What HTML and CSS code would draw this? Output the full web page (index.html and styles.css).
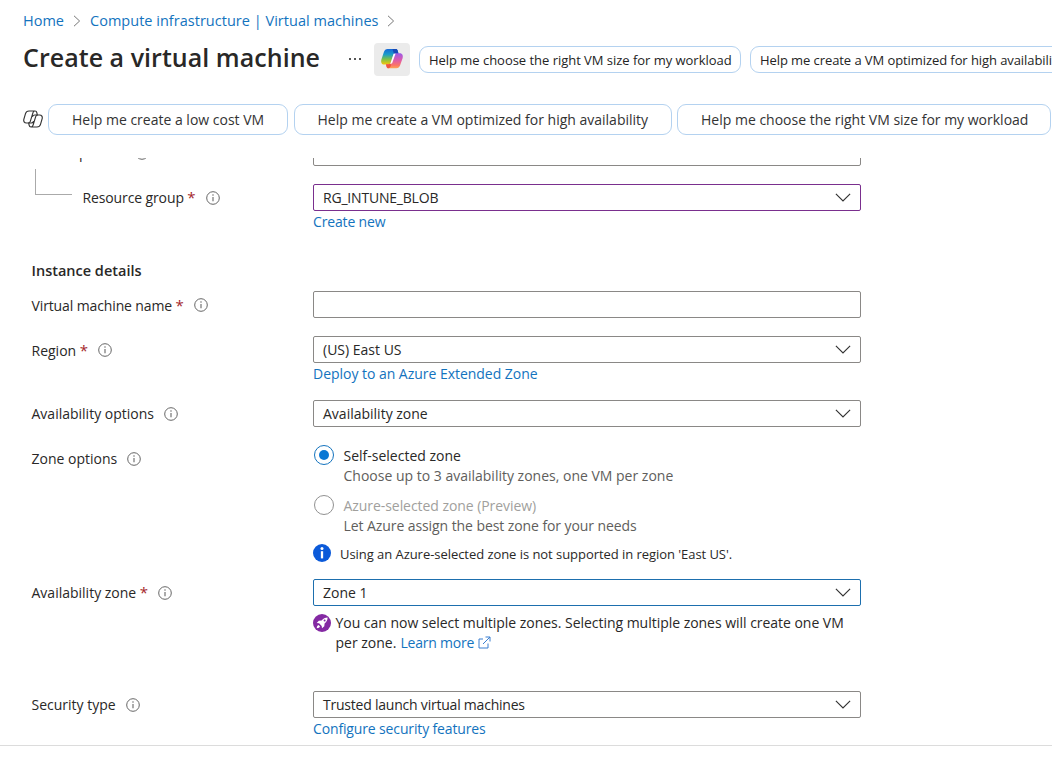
FILE: index.html
```html
<!DOCTYPE html>
<html lang="en">
<head>
<meta charset="utf-8">
<title>Create a virtual machine</title>
<link rel="stylesheet" href="styles.css">
</head>
<body>
<svg class="defs" width="0" height="0" aria-hidden="true">
  <symbol id="info" viewBox="0 0 14 14"><circle cx="7" cy="7" r="6.3" fill="none" stroke="#666" stroke-width="1"/><path d="M7 6v4.2" stroke="#666" stroke-width="1.1"/><circle cx="7" cy="4.1" r=".75" fill="#666"/></symbol>
  <symbol id="down" viewBox="0 0 16 9"><path d="M.9.9 8 8 15.1.9" fill="none" stroke="#333" stroke-width="1.15"/></symbol>
  <symbol id="crumb" viewBox="0 0 8 12"><path d="M1 .8 6.6 6 1 11.2" fill="none" stroke="#777" stroke-width="1"/></symbol>
</svg>
<div class="page">
  <nav class="crumbs">
    <a class="crumb-home">Home</a><svg class="sep"><use href="#crumb"/></svg>
    <a class="crumb-vm">Compute infrastructure | Virtual machines</a><svg class="sep"><use href="#crumb"/></svg>
  </nav>
  <header class="title-row">
    <h1>Create a virtual machine</h1>
    <span class="more"><i></i><i></i><i></i></span>
    <span class="copilot">
      <svg width="24" height="22" viewBox="0 0 24 22">
        <defs>
          <linearGradient id="cl" x1="0" y1="0" x2="0" y2="1"><stop offset="0" stop-color="#1668d8"/><stop offset=".35" stop-color="#1a9cc8"/><stop offset=".65" stop-color="#78c04a"/><stop offset="1" stop-color="#f5c50a"/></linearGradient>
          <linearGradient id="cr" x1="0" y1="0" x2="0" y2="1"><stop offset="0" stop-color="#9a5be8"/><stop offset=".45" stop-color="#dc5aae"/><stop offset=".8" stop-color="#fb7468"/><stop offset="1" stop-color="#fda555"/></linearGradient>
        </defs>
        <path d="M7.600 1h8.200c1 0 1.600.7 1.900 1.700l.7 2.500h-1.800c-2 0-2.800 1.200-3.400 3l-1.700 5.600c-.5 1.600-1.500 2.700-3 2.700H4.200C1.500 16.500.7 14 1.400 11.400L3.900 4C4.600 2 5.700 1 7.600 1Z" fill="url(#cl)"/>
        <path d="M13.500 1h2.300c1 0 1.600.7 1.900 1.700l.9 3.300h-4.600l-1.500-5Z" fill="#1849b6"/>
        <path d="M16.400 20.200H8.500c-1.200 0-1.700-.8-2-1.800l-.6-2.100h2.200c1.500 0 2.500-1 3-2.500l1.700-5.600c.6-1.900 1.500-3 3.400-3h3.600c2.700 0 3.500 2.500 2.800 5L20.100 17.200c-.7 2-1.800 3-3.700 3Z" fill="url(#cr)"/>
        <path d="m6 16.300.5 2.100c.3 1 .8 1.800 2 1.800 1.200 0 1.800-.9 2.200-2.200l1.200-4.700c-.6 1.800-1.600 3-3.300 3Z" fill="#ef543e"/>
        <path d="m13.600 5.800-3.500 10.400 2-.9 3.500-9.800Z" fill="#fff"/>
      </svg>
    </span>
    <span class="chip chip-a"><span>Help me choose the right VM size for my workload</span></span>
    <span class="chip chip-b"><span>Help me create a VM optimized for high availability</span></span>
  </header>
  <div class="prompts">
    <svg class="outline" width="20" height="18" viewBox="0 0 20 18" fill="none" stroke="#333" stroke-width="1.15">
      <path id="leaf" d="M6 1h6c-1.200 0-1.800.8-2.100 1.800L7.300 11.400c-.3 1-.9 1.600-2 1.600H3.400C1.300 13 .3 11.200.9 9.200L2.500 3.600C3 1.900 4.200 1 6 1ZM12 1c1.100 0 1.700.7 1.900 1.800l.4 2.200h-2.500c-1.200 0-2 .7-2.400 1.800"/>
      <use href="#leaf" transform="rotate(180 10 9)"/>
    </svg>
    <span class="pill pill-a"><span>Help me create a low cost VM</span></span>
    <span class="pill pill-b"><span>Help me create a VM optimized for high availability</span></span>
    <span class="pill pill-c"><span>Help me choose the right VM size for my workload</span></span>
  </div>
  <main class="form">
    <div class="row row-sub">
      <div class="label"><span class="t-sub">Subscription</span><b>*</b><svg class="info"><use href="#info"/></svg></div>
      <div class="box"></div>
    </div>
    <div class="row row-rg">
      <div class="label"><span class="branch"></span><span class="t-rg">Resource group</span><b>*</b><svg class="info"><use href="#info"/></svg></div>
      <div><div class="box purple"><span class="v-rg">RG_INTUNE_BLOB</span><svg class="down"><use href="#down"/></svg></div><a class="link l-new">Create new</a></div>
    </div>
    <h2>Instance details</h2>
    <div class="row row-name">
      <div class="label low"><span class="t-name">Virtual machine name</span><b>*</b><svg class="info"><use href="#info"/></svg></div>
      <div class="box"></div>
    </div>
    <div class="row row-region">
      <div class="label low"><span class="t-region">Region</span><b>*</b><svg class="info"><use href="#info"/></svg></div>
      <div><div class="box"><span class="v-region">(US) East US</span><svg class="down"><use href="#down"/></svg></div><a class="link l-deploy">Deploy to an Azure Extended Zone</a></div>
    </div>
    <div class="row row-avail">
      <div class="label"><span class="t-avail">Availability options</span><svg class="info"><use href="#info"/></svg></div>
      <div class="box"><span class="v-avail">Availability zone</span><svg class="down"><use href="#down"/></svg></div>
    </div>
    <div class="row row-zoneopt">
      <div class="label"><span class="t-zoneopt">Zone options</span><svg class="info"><use href="#info"/></svg></div>
      <div class="options">
        <div class="option"><span class="radio on"></span><div><p class="o-self">Self-selected zone</p><p class="hint o-choose">Choose up to 3 availability zones, one VM per zone</p></div></div>
        <div class="option"><span class="radio"></span><div><p class="off o-azure">Azure-selected zone (Preview)</p><p class="hint o-let">Let Azure assign the best zone for your needs</p></div></div>
        <div class="notice"><svg width="18" height="18" viewBox="0 0 18 18"><circle cx="9" cy="9" r="9" fill="#0b5ad9"/><circle cx="9" cy="4.500" r="1.500" fill="#fff"/><path d="M9 7.200v7.200" stroke="#fff" stroke-width="2.300"/></svg><span class="o-using">Using an Azure-selected zone is not supported in region 'East US'.</span></div>
      </div>
    </div>
    <div class="row row-zone">
      <div class="label"><span class="t-zone">Availability zone</span><b>*</b><svg class="info"><use href="#info"/></svg></div>
      <div><div class="box blue"><span class="v-zone">Zone 1</span><svg class="down"><use href="#down"/></svg></div>
        <div class="tip">
          <svg class="rocket" width="18" height="18" viewBox="0 0 18 18"><circle cx="9" cy="9" r="9" fill="#8429a3"/><path d="M14.600 3.400c-2.500 0-4.300 1-6 3L5.800 6.700 3.700 9l2.400.3 2.600 2.600.3 2.400 2.300-2.100.3-2.800c2-1.700 3-3.500 3-6Z" fill="#fff"/><path d="M3.800 14.200c0-1.700.5-2.700 1.700-3.200l1.500 1.500c-.5 1.200-1.500 1.700-3.200 1.700Z" fill="#fff"/><circle cx="11.600" cy="6.400" r="1" fill="#8429a3"/></svg>
          <div><p class="o-you">You can now select multiple zones. Selecting multiple zones will create one VM</p>
          <p class="tip-line"><span class="o-per">per zone.</span><a class="o-learn">Learn more</a><svg width="13" height="13" viewBox="0 0 13 13" fill="none" stroke="#3b7fd0" stroke-width="1"><path d="M5 3H1v9h9V7.500M7.500 1H12v4.500M12 1 5 8"/></svg></p></div>
        </div>
      </div>
    </div>
    <div class="row row-sec">
      <div class="label"><span class="t-sec">Security type</span><svg class="info"><use href="#info"/></svg></div>
      <div><div class="box"><span class="v-sec">Trusted launch virtual machines</span><svg class="down"><use href="#down"/></svg></div><a class="link l-conf">Configure security features</a></div>
    </div>
  </main>
  <footer class="footer"></footer>
</div>
</body>
</html>
```

FILE: styles.css
```css
* { box-sizing: border-box; }
body { margin: 0; background: #fff; color: #292827; font-family: "Open Sans", "Noto Sans", sans-serif; font-size: 14px; line-height: 20px; }
p, h1, h2 { margin: 0; }
a { color: #1373be; }
svg { flex: none; display: block; }
.defs { position: absolute; }
.page { width: 1052px; height: 768px; overflow: hidden; display: flex; flex-direction: column; white-space: nowrap; }

.crumbs { height: 40px; padding: 1px 0 0 23px; display: flex; align-items: center; font-size: 14.5px; }
.crumb-home { width: 42px; }
.crumb-vm { letter-spacing: 0.02px; }
.sep { width: 8px; height: 12px; margin: 0 9px 0 8px; }
.title-row { height: 38px; padding-left: 23px; display: flex; align-items: center; }
h1 { flex: none; width: 326px; font-size: 25px; line-height: 34px; font-weight: 600; letter-spacing: 0.04px; margin-top: -4px; }
.more { flex: none; display: flex; gap: 3px; width: 25px; }
.more i { width: 2px; height: 2px; background: #555; }
.copilot { flex: none; width: 36px; height: 33px; border-radius: 4px; background: #ebebeb; display: flex; align-items: center; justify-content: center; margin-right: 9px; }
.chip { flex: none; height: 27px; border: 1px solid #b4d2f0; border-radius: 9px; padding: 2px 0 0 9px; display: flex; align-items: center; margin-right: 9px; color: #242424; font-size: 13px; letter-spacing: -0.03px; }
.chip-a { width: 322px; }
.chip-b { width: 340px; letter-spacing: -0.08px; }

.prompts { height: 80px; padding: 26px 0 0 24px; display: flex; align-items: flex-start; }
.outline { margin: 6px 5px 0 -1px; }
.pill { flex: none; height: 31px; border: 1px solid #b4d2f0; border-radius: 9px; display: flex; align-items: center; padding-left: 23px; color: #333; }
.pill-a { width: 240px; margin-right: 6px; }
.pill-b { width: 378px; margin-right: 5px; padding-left: 22.5px; }
.pill-c { width: 374px; }

.form { height: 587px; overflow: hidden; padding-left: 31px; }
.row { display: grid; grid-template-columns: 282px 548px; align-items: start; }
.label { height: 27px; display: flex; align-items: center; padding-left: 0.5px; }
.low { height: 29px; }
.low .info { margin-top: -1px; }
.label b { color: #a4262c; font-weight: 500; font-size: 15px; margin: -2px 0 0 3.5px; width: 8.5px; }
.info { width: 14px; height: 14px; margin-left: 10px; }
.box { height: 27px; border: 1px solid #8a8886; border-radius: 2px; padding: 0 9px; display: flex; align-items: center; justify-content: space-between; }
.purple { border-color: #7a2f8e; }
.blue { border-color: #1d6fae; }
.down { width: 16px; height: 9px; }
.link { display: block; line-height: 22px; }
.row-sub { margin-top: -19px; height: 45px; }
.row-rg { height: 76px; }
.branch { width: 37px; height: 26px; margin: -31px 10.5px 0 3.5px; border: solid #aaa; border-width: 0 0 1px 1px; }
h2 { font-size: 14.5px; line-height: 21px; height: 31px; font-weight: 600; padding-left: 0.5px; }
.row-name { height: 45px; }
.row-region { height: 64px; }
.row-avail { height: 45px; }
.row-zoneopt { height: 134px; }
.row-zone { height: 112px; }
.options { display: flex; flex-direction: column; }
.option { height: 50px; display: flex; gap: 9.5px; margin-left: 1px; }
.option p:first-child { margin-top: 1px; }
.radio { width: 20px; height: 20px; border: 1px solid #919191; border-radius: 50%; flex: none; display: grid; place-items: center; }
.on { border-color: #1373be; }
.on::after { content: ""; width: 10px; height: 10px; border-radius: 50%; background: #0a78d4; }
.hint { color: #605e5c; }
.off { color: #a19f9d; }
.notice { display: flex; align-items: center; gap: 9px; height: 18px; margin-top: -1px; font-size: 13px; }
.notice span { margin-top: 2px; }
.tip { display: flex; gap: 4.5px; padding-top: 7px; }
.rocket { margin-top: 1px; }
.tip-line { display: flex; align-items: center; }
.tip-line svg { margin: -2px 0 0 4px; }
.footer { border-top: 1px solid #dcdcdc; flex: 1; }

/* letter spacing tuned to the width of each text */
.t-rg, .t-name { letter-spacing: -0.12px; }
.v-rg { letter-spacing: -0.2px; }
.l-new { letter-spacing: -0.15px; }
.l-deploy { letter-spacing: -0.03px; }
.o-azure { letter-spacing: -0.06px; }
.o-let { letter-spacing: -0.08px; }
.o-using { letter-spacing: -0.05px; }
.o-you { letter-spacing: -0.03px; }
.o-learn { letter-spacing: -0.22px; margin-left: 4px; }
.v-sec { letter-spacing: -0.22px; }
.l-conf { letter-spacing: -0.14px; }
```
